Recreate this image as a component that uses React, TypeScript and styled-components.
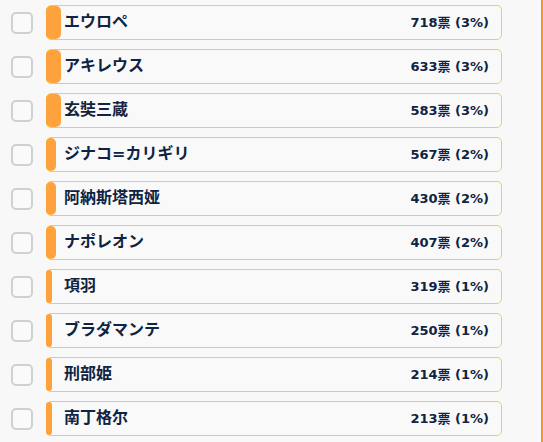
import styled, { createGlobalStyle } from "styled-components";

type Entry = {
  name: string;
  votes: number;
  pct: number;
};

const ENTRIES: Entry[] = [
  { name: "エウロペ", votes: 718, pct: 3 },
  { name: "アキレウス", votes: 633, pct: 3 },
  { name: "玄奘三蔵", votes: 583, pct: 3 },
  { name: "ジナコ=カリギリ", votes: 567, pct: 2 },
  { name: "阿納斯塔西娅", votes: 430, pct: 2 },
  { name: "ナポレオン", votes: 407, pct: 2 },
  { name: "項羽", votes: 319, pct: 1 },
  { name: "ブラダマンテ", votes: 250, pct: 1 },
  { name: "刑部姫", votes: 214, pct: 1 },
  { name: "南丁格尔", votes: 213, pct: 1 },
];

// bar widths as they appear on the page, by rounded percentage
const barWidth = (pct: number) => (pct >= 3 ? 15 : pct === 2 ? 10 : 6);

const App = () => {
  return (
    <>
      <GlobalStyle />
      <Page>
        <List>
          {ENTRIES.map((e) => (
            <Row key={e.name}>
              <Check />
              <VoteBox>
                <Bar style={{ width: barWidth(e.pct) }} />
                <Name>{e.name}</Name>
                <Count>
                  {e.votes}票 ({e.pct}%)
                </Count>
              </VoteBox>
            </Row>
          ))}
        </List>
      </Page>
    </>
  );
};

const GlobalStyle = createGlobalStyle`
  html, body {
    margin: 0;
    padding: 0;
    background: #f8f8f8;
  }
`;

const Page = styled.div`
  width: 541px;
  height: 442px;
  overflow: hidden;
  border-right: 2px solid #f7931e;
  background: #f8f8f8;
  font-family: "DejaVu Sans", "Noto Sans CJK JP", sans-serif;
  color: #0f2342;
`;

const List = styled.div`
  display: flex;
  flex-direction: column;
  gap: 9px;
  padding: 5px 0 0 11px;
`;

const Row = styled.div`
  display: flex;
  align-items: center;
  gap: 13px;
  height: 35px;
`;

const Check = styled.div`
  width: 22px;
  height: 22px;
  box-sizing: border-box;
  border: 2px solid #d0d0d0;
  border-radius: 5px;
  background: #fafafa;
`;

const VoteBox = styled.div`
  position: relative;
  display: flex;
  align-items: center;
  justify-content: space-between;
  box-sizing: border-box;
  width: 456px;
  height: 35px;
  padding: 0 12px 1px 17px;
  border: 1px solid #f8cc3e;
  border-radius: 5px;
  background: #f9f9f9;
`;

const Bar = styled.div`
  position: absolute;
  left: -1px;
  top: 0;
  bottom: 0;
  background: #fda23c;
  border-radius: 5px;
`;

const Name = styled.span`
  position: relative;
  font-size: 16px;
  font-weight: 700;
  line-height: 1;
`;

const Count = styled.span`
  position: relative;
  font-size: 13px;
  font-weight: 700;
  line-height: 1;
`;

export default App;
